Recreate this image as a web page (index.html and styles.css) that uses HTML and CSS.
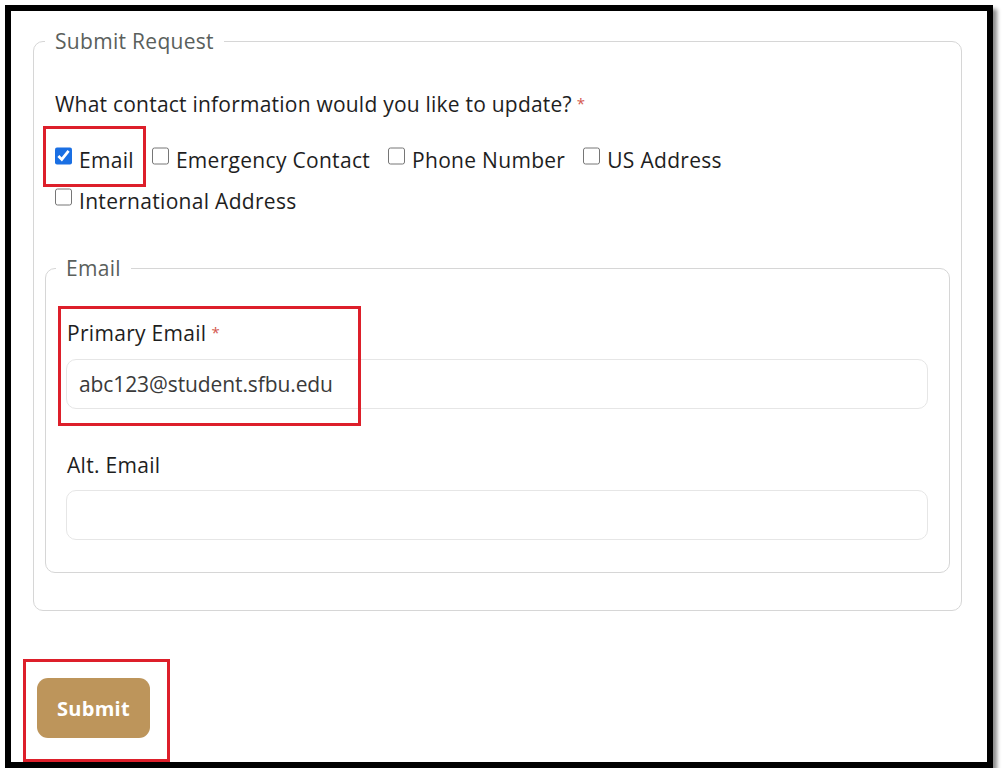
FILE: index.html
```html
<!DOCTYPE html>
<html lang="en">
<head>
<meta charset="utf-8">
<title>Submit Request</title>
<link rel="stylesheet" href="styles.css">
</head>
<body>
<div class="frame">
  <fieldset class="outer">
    <legend class="legend">Submit Request</legend>
    <p class="question">What contact information would you like to update?<span class="req">*</span></p>
    <div class="options">
      <label class="opt mark mark-email"><input type="checkbox" checked><span>Email</span></label>
      <label class="opt"><input type="checkbox"><span>Emergency Contact</span></label>
      <label class="opt"><input type="checkbox"><span>Phone Number</span></label>
      <label class="opt"><input type="checkbox"><span>US Address</span></label>
      <label class="opt"><input type="checkbox"><span>International Address</span></label>
    </div>
    <fieldset class="inner">
      <legend class="legend sub">Email</legend>
      <div class="field mark mark-primary">
        <label class="flabel">Primary Email<span class="req">*</span></label>
        <input class="finput" type="text" value="abc123@student.sfbu.edu">
      </div>
      <div class="field alt">
        <label class="flabel">Alt. Email</label>
        <input class="finput" type="text" value="">
      </div>
    </fieldset>
  </fieldset>
  <div class="actions">
    <button class="submit mark mark-submit" type="button">Submit</button>
  </div>
</div>
</body>
</html>
```
FILE: styles.css
```css
html, body {
  margin: 0;
  padding: 0;
  background: #fff;
}
body {
  font-family: "Open Sans", "Liberation Sans", sans-serif;
  color: #1e1e1e;
}
.frame {
  margin: 5px 0 0 5px;
  width: 988px;
  height: 763px;
  box-sizing: border-box;
  border: 6px solid #000;
  box-shadow: 4px 4px 4px rgba(0, 0, 0, 0.45);
  padding: 17px 25px 0 22px;
  background: #fff;
}
.outer {
  margin: 0;
  border: 1px solid #d6d6d6;
  border-radius: 10px;
  padding: 0 11px 37px;
  min-width: 0;
}
.legend {
  padding: 0 10px;
  font-size: 21px;
  line-height: 26px;
  color: #5a605c;
  letter-spacing: 0.3px;
}
.question {
  margin: 36px 0 0 10px;
  font-size: 21px;
  line-height: 26px;
  letter-spacing: 0.22px;
}
.req {
  color: #d4574e;
  font-size: 15px;
  margin-left: 5px;
  vertical-align: 3px;
}
.options {
  display: flex;
  flex-wrap: wrap;
  column-gap: 18px;
  row-gap: 15px;
  margin: 30px 0 0 10px;
  width: 700px;
}
.opt {
  display: flex;
  align-items: flex-start;
  gap: 7px;
  font-size: 21px;
  line-height: 26px;
  letter-spacing: 0.3px;
  position: relative;
}
.opt input {
  margin: 0;
  width: 17px;
  height: 18px;
  accent-color: #1a6fe3;
}
.mark::after {
  content: "";
  position: absolute;
  border: 3px solid #dd1f2a;
  pointer-events: none;
}
.mark-email::after {
  left: -12px;
  right: -12px;
  top: -21px;
  bottom: -14px;
}
.inner {
  margin: 41px 0 0;
  border: 1px solid #d6d6d6;
  border-radius: 10px;
  padding: 0 21px 32px 20px;
  min-width: 0;
}
.legend.sub {
  margin-left: -10px;
}
.field {
  position: relative;
  display: flex;
  flex-direction: column;
}
.field:first-of-type {
  margin-top: 38px;
}
.field.alt {
  margin-top: 43px;
}
.flabel {
  font-size: 21px;
  line-height: 26px;
  letter-spacing: 0.3px;
  margin-left: 1px;
}
.finput {
  margin-top: 13px;
  height: 50px;
  box-sizing: border-box;
  border: 1px solid #e6e6e6;
  border-radius: 10px;
  padding: 0 12px;
  font-family: inherit;
  font-size: 21px;
  letter-spacing: -0.1px;
  color: #3a3a3a;
  background: #fff;
  outline: none;
}
.alt .finput {
  margin-top: 12px;
}
.mark-primary::after {
  left: -8px;
  width: 297px;
  top: -13px;
  height: 114px;
}
.actions {
  padding: 67px 0 0 4px;
}
.submit {
  position: relative;
  width: 113px;
  height: 60px;
  border: none;
  border-radius: 11px;
  background: #bd955b;
  color: #fff;
  font-family: inherit;
  font-size: 20px;
  font-weight: 700;
  letter-spacing: 0.3px;
  cursor: pointer;
}
.mark-submit::after {
  left: -14px;
  right: -20px;
  top: -19px;
  bottom: -24px;
}
```
